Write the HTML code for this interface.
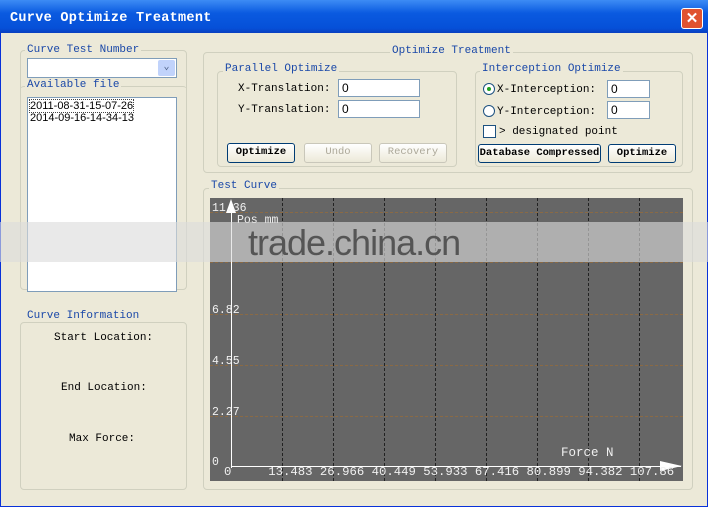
<!DOCTYPE html>
<html><head><style>
*{margin:0;padding:0;box-sizing:border-box}
body{width:708px;height:507px;background:#fff;position:relative;overflow:hidden;font-family:"Liberation Mono","DejaVu Sans Mono",monospace;font-size:11px;color:#000}
.a{position:absolute}
.win{left:0;top:0;width:708px;height:507px;background:#ece9d8;border:1px solid #0831d9;border-top:none}
.title{left:0;top:0;width:708px;height:33px;background:linear-gradient(#3d8cf5,#0a5ae0 40%,#0650d8 85%,#0a3fc0);color:#fff;font-weight:bold;font-size:13.5px;padding:11px 0 0 10px;letter-spacing:0.3px}
.close{left:681px;top:8px;width:22px;height:21px;background:#e0532f;border:1px solid #fff;border-radius:3px;color:#fff;text-align:center;font:bold 15px/19px "Liberation Sans",sans-serif}
.grp{border:1px solid #d0d0bf;border-radius:4px}
.lbl{color:#1a48a8;background:#ece9d8;padding:0 2px;white-space:nowrap}
.inp{background:#fff;border:1px solid #7f9db9;padding:1px 3px;font-family:"Liberation Sans",sans-serif;font-size:12px}
.btn{border:1px solid #003c74;border-radius:3px;background:linear-gradient(#fff,#ece9d8);text-align:center;line-height:17px;font-weight:bold;font-size:10.5px}
.dis{border-color:#c9c7ba;color:#aca899;font-weight:normal}
.gl{height:0;border-top:1px dashed #8a6a45;left:210px;width:473px}
.vl{width:0;border-left:1px dashed #222;top:198px;height:283px}
.wt{color:#f0f0f0;font-size:11.5px}
</style></head><body>
<div class="a win"></div>
<div class="a title">Curve Optimize Treatment</div>
<div class="a close">✕</div>

<div class="a grp" style="left:20px;top:50px;width:167px;height:240px"></div>
<div class="a lbl" style="left:25px;top:44px">Curve Test Number</div>
<div class="a inp" style="left:27px;top:58px;width:150px;height:20px"></div>
<div class="a" style="left:158px;top:60px;width:17px;height:16px;background:#c1d3fb;border-radius:2px;color:#4d6185;text-align:center;font-size:10px;line-height:16px">⌄</div>
<div class="a grp" style="left:20px;top:86px;width:167px;height:204px;border-width:1px 0 0 0"></div>
<div class="a lbl" style="left:25px;top:79px">Available file</div>
<div class="a" style="left:27px;top:97px;width:150px;height:195px;background:#fff;border:1px solid #7f9db9;font-family:'Liberation Sans',sans-serif;font-size:11px;padding:2px 2px;line-height:12px">
<span style="outline:1px dotted #444">2011-08-31-15-07-26</span><br>2014-09-16-14-34-13</div>

<div class="a grp" style="left:20px;top:322px;width:167px;height:168px"></div>
<div class="a lbl" style="left:25px;top:310px">Curve Information</div>
<div class="a" style="left:54px;top:332px">Start Location:</div>
<div class="a" style="left:61px;top:382px">End Location:</div>
<div class="a" style="left:69px;top:433px">Max Force:</div>

<div class="a grp" style="left:203px;top:52px;width:490px;height:121px"></div>
<div class="a lbl" style="left:390px;top:45px">Optimize Treatment</div>
<div class="a grp" style="left:217px;top:71px;width:240px;height:96px"></div>
<div class="a lbl" style="left:223px;top:63px">Parallel Optimize</div>
<div class="a" style="left:238px;top:83px">X-Translation:</div>
<div class="a inp" style="left:338px;top:79px;width:82px;height:18px">0</div>
<div class="a" style="left:238px;top:104px">Y-Translation:</div>
<div class="a inp" style="left:338px;top:100px;width:82px;height:18px">0</div>
<div class="a btn" style="left:227px;top:143px;width:68px;height:20px">Optimize</div>
<div class="a btn dis" style="left:304px;top:143px;width:68px;height:20px">Undo</div>
<div class="a btn dis" style="left:379px;top:143px;width:68px;height:20px">Recovery</div>

<div class="a grp" style="left:475px;top:71px;width:208px;height:96px"></div>
<div class="a lbl" style="left:480px;top:63px">Interception Optimize</div>
<div class="a" style="left:483px;top:83px;width:12px;height:12px;border:1px solid #1c5180;border-radius:50%;background:#fff"><div class="a" style="left:3px;top:3px;width:4px;height:4px;border-radius:50%;background:#21a121"></div></div>
<div class="a" style="left:497px;top:84px">X-Interception:</div>
<div class="a inp" style="left:607px;top:80px;width:43px;height:18px">0</div>
<div class="a" style="left:483px;top:105px;width:12px;height:12px;border:1px solid #1c5180;border-radius:50%;background:#fff"></div>
<div class="a" style="left:497px;top:106px">Y-Interception:</div>
<div class="a inp" style="left:607px;top:101px;width:43px;height:18px">0</div>
<div class="a" style="left:483px;top:125px;width:13px;height:13px;border:1px solid #1c5180;background:#fff"></div>
<div class="a" style="left:499px;top:126px">&gt; designated point</div>
<div class="a btn" style="left:478px;top:144px;width:123px;height:19px">Database Compressed</div>
<div class="a btn" style="left:608px;top:144px;width:68px;height:19px">Optimize</div>

<div class="a grp" style="left:203px;top:188px;width:490px;height:302px"></div>
<div class="a lbl" style="left:209px;top:180px">Test Curve</div>
<div class="a" style="left:210px;top:198px;width:473px;height:283px;background:#666"></div>
<div class="a gl" style="top:212px"></div>
<div class="a gl" style="top:262px"></div>
<div class="a gl" style="top:314px"></div>
<div class="a gl" style="top:365px"></div>
<div class="a gl" style="top:416px"></div>
<div class="a vl" style="left:282px"></div>
<div class="a vl" style="left:333px"></div>
<div class="a vl" style="left:384px"></div>
<div class="a vl" style="left:435px"></div>
<div class="a vl" style="left:486px"></div>
<div class="a vl" style="left:537px"></div>
<div class="a vl" style="left:588px"></div>
<div class="a vl" style="left:639px"></div>
<div class="a" style="left:231px;top:205px;width:1px;height:263px;background:#fff"></div>
<div class="a" style="left:231px;top:466px;width:450px;height:1px;background:#fff"></div>
<div class="a" style="left:226px;top:199px;width:0;height:0;border-left:5px solid transparent;border-right:5px solid transparent;border-bottom:14px solid #fff"></div>
<div class="a" style="left:660px;top:461px;width:0;height:0;border-top:5px solid transparent;border-bottom:5px solid transparent;border-left:22px solid #fff"></div>
<div class="a wt" style="left:212px;top:202px">11.36</div>
<div class="a wt" style="left:237px;top:214px">Pos mm</div>
<div class="a wt" style="left:212px;top:304px">6.82</div>
<div class="a wt" style="left:212px;top:355px">4.55</div>
<div class="a wt" style="left:212px;top:406px">2.27</div>
<div class="a wt" style="left:212px;top:456px">0</div>
<div class="a wt" style="left:561px;top:446px;font-size:12.5px">Force N</div>
<div class="a wt" style="left:224px;top:465px;font-size:12.3px;white-space:pre">0     13.483 26.966 40.449 53.933 67.416 80.899 94.382 107.86</div>

<div class="a" style="left:0;top:222px;width:708px;height:40px;background:rgba(220,220,220,0.62)"></div>
<div class="a" style="left:248px;top:224px;font:36px/38px 'Liberation Sans',sans-serif;color:#555;letter-spacing:-1px">trade.china.cn</div>
</body></html>
